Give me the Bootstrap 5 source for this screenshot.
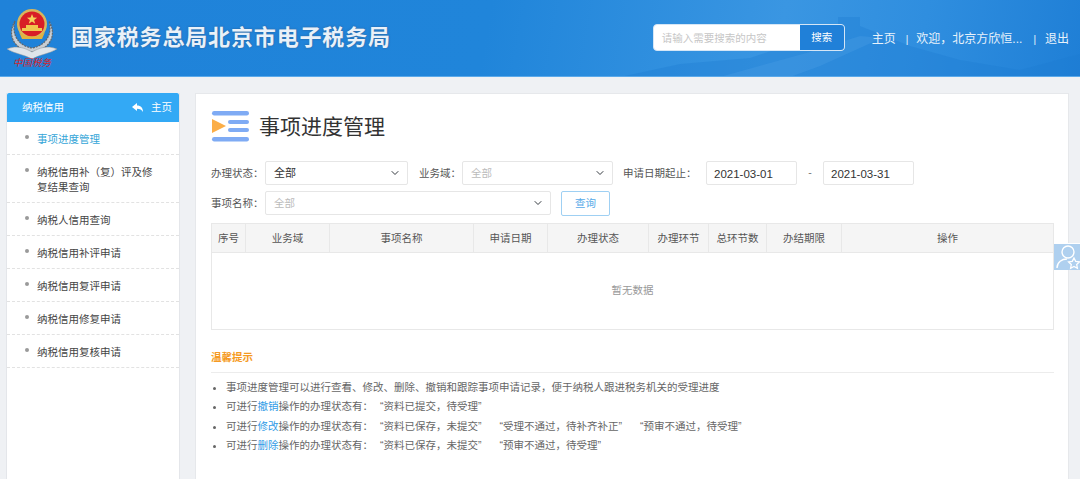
<!DOCTYPE html>
<html lang="zh-CN">
<head>
<meta charset="utf-8">
<title>事项进度管理</title>
<link rel="stylesheet" href="https://cdn.jsdelivr.net/npm/bootstrap@5.3.0/dist/css/bootstrap.min.css">
<style>
html,body{height:479px;overflow:hidden}
body{background:#eff1f4;font-family:"Liberation Sans","Noto Sans CJK SC",sans-serif;font-size:10.5px;color:#555;position:relative}
.top-bar{height:77px;background:linear-gradient(100deg,#1f82d9 0%,#2085da 45%,#3a96e2 72%,#2f8edf 85%,#1f7fd6 100%);position:relative;overflow:hidden;border-bottom:1px solid #5aa9ea}
.wall{position:absolute;right:0;top:0;width:460px;height:77px}
.top-inner{position:relative;height:76px;padding-left:7px}
.logo-col{width:50px;height:70px;margin-top:7px}
.logo-col svg{display:block}
.logo-txt{color:#d8222a;font-size:9.5px;line-height:12px;font-weight:400;font-style:italic;text-align:center;white-space:nowrap;margin-top:-2px}
.site-name{margin-left:14px;font-size:22px;font-weight:700;letter-spacing:.85px;color:#e9f1f9;text-shadow:0 0 2px rgba(60,60,80,.55);line-height:26px}
.search-box{width:192px;height:27px;background:#fff;border:1px solid #d5e6f6;border-radius:4px;margin-left:auto;overflow:hidden;margin-top:-1px}
.search-hint{flex:1;padding-left:8px;font-size:10.5px;color:#c6c6c6;line-height:26px}
.search-go{width:44px;background:#2080d8;color:#fff;border:0;padding:0;font-size:10.5px;border-radius:0;height:25px}
.top-nav{color:#e8f2fb;font-size:12px;margin:2px 11px 0 27px;white-space:nowrap}
.top-nav .sep{margin:0 9px 0 11px;font-size:10px}
.top-nav .sep.first{margin:0 8px 0 10px}
.page-wrap{padding:16px 11px 0 6px;gap:15px;height:402px}
.side-panel{width:174px;flex:none;background:#fff;border:1px solid #e4e6ea;border-top:0;border-bottom:0;height:386px}
.side-head{height:29px;background:#33a9f5;color:#fff;padding:0 7px 0 15px;border-radius:2px 2px 0 0}
.side-item{display:block;position:relative;padding:10px 20px 7px 30px;line-height:15px;color:#444;border-bottom:1px dashed #e2e2e2;text-decoration:none}
.side-item::before{content:"";position:absolute;left:18px;top:13px;width:4px;height:4px;border-radius:50%;background:#9a9a9a}
.side-item.current{color:#35a6d8}
.main-panel{flex:1;background:#fff;border:1px solid #e6e8eb;border-bottom:0;height:386px;padding:17px 14px 0 15px;min-width:0}
.page-title{font-size:21px;font-weight:400;color:#333;margin:2px 0 0 10px;line-height:30px}
.title-row{height:30px;margin-bottom:20px}
.filter-row{height:24px;margin-bottom:6px;white-space:nowrap}
.fld-label{color:#555;flex:none;padding-top:2px}
.lb1{width:54px}
.lb2{width:43px;margin-left:11px}
.lb3{width:83px;margin-left:10px}
.sel-box{height:24px;min-height:0;padding:1px 20px 0 8px;font-size:10.5px;border:1px solid #e6e6e6;border-radius:2px;background-size:10px 8px;background-position:right 7px center;color:#333;flex:none}
.sel-box.dim{color:#bbb}
.sw1{width:143px;font-size:11px}
.sw2{width:151px}
.sw3{width:286px}
.date-in{width:91px;height:24px;min-height:0;padding:1px 7px 0;border:1px solid #e6e6e6;border-radius:2px;color:#333;flex:none;font-family:"Liberation Sans",sans-serif;font-size:11.5px}
.date-dash{width:26px;text-align:center;color:#777;flex:none}
.query-btn{width:49px;height:25px;margin-left:10px;padding:1px 0 0;font-size:10.5px;color:#55a9e8;border:1px solid #9fd0f3;border-radius:2px;background:#fff}
.data-tbl{table-layout:fixed;width:842px;margin:8px 0 0;border-color:#e8e8e8;font-size:10.5px}
.data-tbl th{background:#f5f5f5;height:29px;padding:1px 0 0;text-align:center;font-weight:400;color:#555;vertical-align:middle;border-color:#e8e8e8;box-shadow:none}
.data-tbl td{height:77px;text-align:center;vertical-align:middle;color:#999;padding:0;box-shadow:none}
.c1{width:34px}.c2{width:84px}.c3{width:144px}.c4{width:74px}.c5{width:101px}.c6{width:60px}.c7{width:58px}.c8{width:75px}.c9{width:212px}
.tips-title{color:#f59a23;font-weight:700;margin-top:20px;padding-bottom:7px;border-bottom:1px solid #ececec;line-height:15px}
.tips-list{margin:5px 0 0;padding-left:15px;line-height:19.3px;color:#666}
.tips-list a{color:#2f9be6;text-decoration:none}
.q-first{margin-left:7px}
.q-gap{margin-left:18px}
.float-tab{position:absolute;right:0;top:243px;width:26px;height:27px;background:#afd0ef;border-top:1px solid #fff}
</style>
</head>
<body>
<header class="top-bar">
  <svg class="wall" viewBox="0 0 460 77" aria-hidden="true">
    <path d="M0 77 L60 64 L130 58 L190 38 L212 24 L218 24 L218 17 L240 17 L240 26 L290 46 L340 60 L400 70 L460 54 L460 77Z" fill="#1c7bd0" opacity=".35"/>
    <path d="M100 77 L190 52 L240 36 L262 38 L200 66 L170 77Z" fill="#4a9fe4" opacity=".35"/>
  </svg>
  <div class="top-inner d-flex align-items-center">
    <div class="logo-col flex-none">
      <svg width="50" height="52" viewBox="0 0 50 52" aria-hidden="true">
        <path d="M8 14 C1 26 5 38 17 43 L25 45 L33 43 C45 38 49 26 42 14 C46 28 38 39 25 41 C12 39 4 28 8 14Z" fill="#c9ced3" stroke="#60656a" stroke-width="1.2" stroke-dasharray="2 1"/>
        <path d="M0 42 C10 38 18 41 25 45 C32 41 40 38 50 42 C42 47 34 47 25 52 C16 47 8 47 0 42Z" fill="#dfe5ea" stroke="#8b9299" stroke-width=".5"/>
        <circle cx="25" cy="17" r="15" fill="#d9b65c"/>
        <circle cx="25" cy="17" r="12.5" fill="#d81e26"/>
        <path d="M25 7l1.4 3.6 3.7.1-3 2.3 1.1 3.7-3.2-2.2-3.2 2.2 1.1-3.7-3-2.3 3.7-.1z" fill="#f5d35a"/>
        <rect x="15" y="21" width="20" height="3" fill="#f0c64e"/>
        <rect x="19" y="18" width="12" height="3" fill="#f0c64e"/>
        <path d="M12 25 C18 31 32 31 38 25 L35 32 L15 32Z" fill="#e2b23f"/>
      </svg>
      <div class="logo-txt">中国税务</div>
    </div>
    <div class="site-name">国家税务总局北京市电子税务局</div>
    <div class="search-box d-flex">
      <div class="search-hint">请输入需要搜索的内容</div>
      <button class="btn search-go" type="button">搜索</button>
    </div>
    <div class="top-nav">主页<span class="sep first">|</span>欢迎，北京方欣恒...<span class="sep">|</span>退出</div>
  </div>
</header>

<div class="page-wrap d-flex">
  <aside class="side-panel">
    <div class="side-head d-flex align-items-center justify-content-between">
      <span>纳税信用</span>
      <span class="d-flex align-items-center gap-2">
        <svg width="11" height="9" viewBox="0 0 11 9" aria-hidden="true"><path d="M0 4L5 0V2.4C9 2.4 11 5 11 9 9.6 6.6 8 5.8 5 5.8V8Z" fill="#fff"/></svg>
        主页
      </span>
    </div>
    <a class="side-item current" href="#">事项进度管理</a>
    <a class="side-item" href="#">纳税信用补（复）评及修复结果查询</a>
    <a class="side-item" href="#">纳税人信用查询</a>
    <a class="side-item" href="#">纳税信用补评申请</a>
    <a class="side-item" href="#">纳税信用复评申请</a>
    <a class="side-item" href="#">纳税信用修复申请</a>
    <a class="side-item" href="#">纳税信用复核申请</a>
  </aside>

  <main class="main-panel">
    <div class="title-row d-flex align-items-center">
      <svg width="38" height="31" viewBox="0 0 38 31" aria-hidden="true">
        <rect x="1" y="0" width="37" height="4.5" rx="2.2" fill="#7fabf4"/>
        <rect x="17" y="9" width="21" height="4" rx="2" fill="#7fabf4"/>
        <rect x="17" y="17" width="21" height="4" rx="2" fill="#7fabf4"/>
        <rect x="1" y="26" width="37" height="4.5" rx="2.2" fill="#7fabf4"/>
        <path d="M1 8L15 15 1 22Z" fill="#fbae48"/>
      </svg>
      <h1 class="page-title">事项进度管理</h1>
    </div>

    <div class="filter-row d-flex align-items-center">
      <span class="fld-label lb1">办理状态：</span>
      <select class="form-select sel-box sw1"><option>全部</option></select>
      <span class="fld-label lb2">业务域：</span>
      <select class="form-select sel-box sw2 dim"><option>全部</option></select>
      <span class="fld-label lb3">申请日期起止：</span>
      <input class="form-control date-in" value="2021-03-01">
      <span class="date-dash">-</span>
      <input class="form-control date-in" value="2021-03-31">
    </div>
    <div class="filter-row d-flex align-items-center">
      <span class="fld-label lb1">事项名称：</span>
      <select class="form-select sel-box sw3 dim"><option>全部</option></select>
      <button class="btn query-btn" type="button">查询</button>
    </div>

    <table class="table table-bordered data-tbl">
      <thead>
        <tr>
          <th class="c1">序号</th><th class="c2">业务域</th><th class="c3">事项名称</th><th class="c4">申请日期</th><th class="c5">办理状态</th><th class="c6">办理环节</th><th class="c7">总环节数</th><th class="c8">办结期限</th><th class="c9">操作</th>
        </tr>
      </thead>
      <tbody><tr><td colspan="9">暂无数据</td></tr></tbody>
    </table>

    <div class="tips-title">温馨提示</div>
    <ul class="tips-list">
      <li>事项进度管理可以进行查看、修改、删除、撤销和跟踪事项申请记录，便于纳税人跟进税务机关的受理进度</li>
      <li>可进行<a href="#">撤销</a>操作的办理状态有：<span class="q-first">“资料已提交，待受理”</span></li>
      <li>可进行<a href="#">修改</a>操作的办理状态有：<span class="q-first">“资料已保存，未提交”</span><span class="q-gap">“受理不通过，待补齐补正”</span><span class="q-gap">“预审不通过，待受理”</span></li>
      <li>可进行<a href="#">删除</a>操作的办理状态有：<span class="q-first">“资料已保存，未提交”</span><span class="q-gap">“预审不通过，待受理”</span></li>
    </ul>
  </main>
</div>

<div class="float-tab">
  <svg width="26" height="26" viewBox="0 0 26 26" aria-hidden="true">
    <circle cx="14" cy="8" r="6" fill="none" stroke="#fff" stroke-width="1.4"/>
    <path d="M3 24C3 18 8 15 13 15" fill="none" stroke="#fff" stroke-width="1.4"/>
    <path d="M20 14l1.7 3.4 3.7.5-2.7 2.6.7 3.7-3.4-1.8-3.4 1.8.7-3.7-2.7-2.6 3.7-.5z" fill="none" stroke="#fff" stroke-width="1.3"/>
  </svg>
</div>
<script src="https://cdn.jsdelivr.net/npm/bootstrap@5.3.0/dist/js/bootstrap.bundle.min.js"></script>
</body>
</html>
